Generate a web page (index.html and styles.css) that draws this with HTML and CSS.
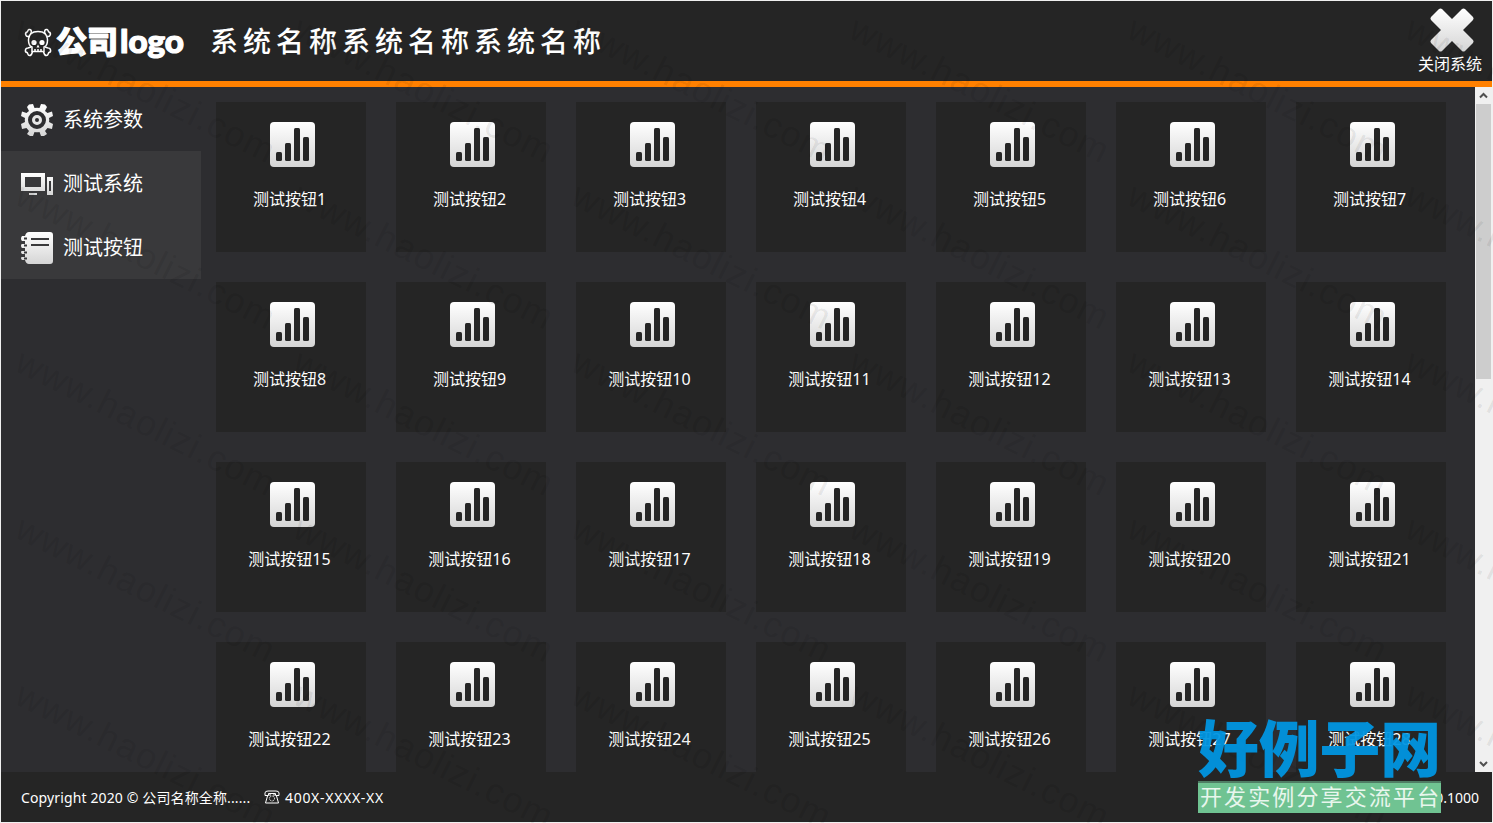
FILE: index.html
```html
<!DOCTYPE html>
<html lang="zh-CN">
<head>
<meta charset="utf-8">
<title>系统名称</title>
<link rel="stylesheet" href="styles.css">
</head>
<body>
<svg class="defs" width="0" height="0" aria-hidden="true">
  <defs>
    <linearGradient id="silver" x1="0" y1="0" x2="0" y2="1"><stop offset="0" stop-color="#fff"/><stop offset="1" stop-color="#d5d5d5"/></linearGradient>
    <symbol id="chart" viewBox="0 0 45 45">
      <rect width="45" height="45" rx="4" fill="url(#silver)"/>
      <g fill="#252525"><rect x="6" y="30" width="6" height="9" rx="1.5"/><rect x="15" y="21" width="6" height="18" rx="1.5"/><rect x="24" y="6" width="6" height="33" rx="1.5"/><rect x="33" y="15" width="6" height="24" rx="1.5"/></g>
    </symbol>
  </defs>
</svg>
<div class="window">
  <header class="header">
    <svg class="logo" width="164" height="44" viewBox="0 0 164 44">
      <g fill="none" stroke="#fff" stroke-width="1.5">
        <path d="M8 12C9 9 8 7 6 7.500C4.500 8 5 9.500 4 10C1.500 11 2.500 15 5.500 14.500L7 15M22 12C21 9 22 7 24 7.500C25.500 8 25 9.500 26 10C28.500 11 27.500 15 24.500 14.500L23 15M8 25L5 26C2 26 1.500 30 4 30.500C5 31 4.500 33.500 6.500 33.500C9 33.500 9 31 9.500 29.500M22 25L25 26C28 26 28.500 30 26 30.500C25 31 25.500 33.500 23.500 33.500C21 33.500 21 31 20.500 29.500"/>
        <path d="M5.500 18C5.500 12 9 9.500 15 9.500S24.500 12 24.500 18C24.500 22 24 24 21 25V29.500H9V25C6 24 5.500 22 5.500 18Z"/>
        <path d="M12 27v3M15 27v3M18 27v3"/>
      </g>
      <g fill="#fff"><circle cx="11" cy="20.500" r="2.600"/><circle cx="19" cy="20.500" r="2.600"/><path d="M15 22.500l-1.500 3h3z"/></g>
      <text class="logo-cn" x="33" y="31" textLength="62" lengthAdjust="spacingAndGlyphs">公司</text>
      <text class="logo-en" x="97" y="31" textLength="64" lengthAdjust="spacingAndGlyphs">logo</text>
    </svg>
    <h1 class="title">系统名称系统名称系统名称</h1>
    <button class="close">
      <svg width="46" height="46" viewBox="0 0 46 46"><path d="M10 2Q11.500 .8 13 2L23 12L33 2Q34.500 .8 36 2L44 10Q45.200 11.500 44 13L34 23L44 33Q45.200 34.500 44 36L36 44Q34.500 45.200 33 44L23 34L13 44Q11.500 45.200 10 44L2 36Q.8 34.500 2 33L12 23L2 13Q.8 11.500 2 10Z" fill="url(#silver)"/></svg>
      <span>关闭系统</span>
    </button>
  </header>
  <main class="main">
    <nav class="sidebar">
      <a class="item">
        <svg width="32" height="32" viewBox="0 0 32 32"><path fill="url(#silver)" fill-rule="evenodd" d="M8 0.500L12 0L13.500 4Q16 3.500 18.500 4L20 0L24 0.500L26 3L24 7L26.500 9L31 7.500L32 12L28 14Q28.500 16 28 18L32 20L31 25L26.500 24L24 27L26 30L23 32L20 32L18.500 28Q16 28.500 13.500 28L12 32L9 32L6 30L8 27L5.500 24L1 25L0 20L4 18Q3.500 16 4 14L0 12L1 7.500L5.500 9L8 7L6 3Z M16 7A9 9 0 1 0 16 25A9 9 0 1 0 16 7Z"/><circle cx="16" cy="16" r="3.500" fill="none" stroke="#e6e6e6" stroke-width="3"/></svg>
        <span>系统参数</span>
      </a>
      <div class="submenu">
        <a class="item">
          <svg width="32" height="32" viewBox="0 0 32 32"><path fill="url(#silver)" fill-rule="evenodd" d="M0 5H24V23H0ZM4 9V19H20V9ZM8 25H16V27H8ZM26 9H32V27H26ZM28 13V23H30V13Z"/></svg>
          <span>测试系统</span>
        </a>
        <a class="item">
          <svg width="32" height="32" viewBox="0 0 32 32"><path fill="url(#silver)" d="M8 0H29Q32 0 32 3V29Q32 32 29 32H8Q5 32 4 28H1Q0 27 0 26Q0 25 1 25H4V22H1Q0 21 0 20Q0 19 1 19H4V16H1Q0 15 0 13.500Q0 12 1 12H4V9H1Q0 8 0 6.500Q0 5 1 4H4Q5 0 8 0Z"/><path d="M10 7H28M10 13H28M3 6.500H6M3 13.500H6M3 20.500H6M3 26.500H6" stroke="#39393b" stroke-width="2"/></svg>
          <span>测试按钮</span>
        </a>
      </div>
    </nav>
    <section class="cards" id="cards"></section>
    <div class="scrollbar">
      <svg width="17" height="17" viewBox="0 0 17 17"><path d="M5 10.500L8.500 7L12 10.500" fill="none" stroke="#505050" stroke-width="2"/></svg>
      <div class="thumb"></div>
      <svg class="down" width="17" height="17" viewBox="0 0 17 17"><path d="M5 7L8.500 10.500L12 7" fill="none" stroke="#505050" stroke-width="2"/></svg>
    </div>
  </main>
  <footer class="footer">
    <span class="copyright">Copyright 2020 © 公司名称全称......</span>
    <svg class="phone" width="16" height="14" viewBox="0 0 16 14" fill="none" stroke="#fff"><path d="M1 5.500V3Q1 1 4 1H12Q15 1 15 3V5.500H11.500V3.500H4.500V5.500ZM3.500 6L1.500 13H14.500L12.500 6M6 4V6M10 4V6"/><circle cx="8" cy="8.500" r="2.500" stroke-dasharray="1 .6"/></svg>
    <span class="tel">400X-XXXX-XX</span>
    <span class="version">0.1000</span>
  </footer>
</div>
<svg class="watermark" width="1493" height="823" viewBox="0 0 1493 823" id="watermark"></svg>
<svg class="badge" width="246" height="98" viewBox="0 0 246 98">
  <text class="badge-name" x="1" y="56" textLength="243" lengthAdjust="spacingAndGlyphs">好例子网</text>
  <rect x="1" y="65" width="243" height="32" fill="#70c392"/>
  <rect x="1" y="65" width="243" height="2" fill="#4f7d64"/>
  <text class="badge-sub" x="3" y="89" textLength="239">开发实例分享交流平台</text>
</svg>
<script src="app.js"></script>
</body>
</html>
```
FILE: styles.css
```css
* { box-sizing: border-box; }
body {
  margin: 0;
  width: 1493px;
  height: 823px;
  overflow: hidden;
  position: relative;
  background: #f0f0f0;
  color: #fff;
  font-family: "Noto Sans", "Noto Sans CJK SC", sans-serif;
}
svg { display: block; flex: none; }
.defs { position: absolute; }
.window {
  width: 1493px;
  height: 823px;
  padding: 1px;
  display: flex;
  flex-direction: column;
}
.header {
  height: 86px;
  flex: none;
  display: flex;
  align-items: flex-start;
  background: #252525;
  border-bottom: 6px solid #ff8000;
  padding: 0 8px 0 22px;
}
.logo { margin-top: 21px; overflow: visible; }
.logo-cn {
  font: 900 31px "Noto Sans CJK SC", sans-serif;
  fill: #fff;
  stroke: #fff;
  stroke-width: 1.2px;
  stroke-linejoin: round;
}
.logo-en {
  font: 900 32px Lato, sans-serif;
  fill: #fff;
  stroke: #fff;
  stroke-width: 1.2px;
  stroke-linejoin: round;
}
.title {
  margin: 19px 0 0 23px;
  font: 500 28px/40px "Noto Sans CJK SC", sans-serif;
  letter-spacing: 5px;
  white-space: nowrap;
}
.close {
  margin-left: auto;
  padding: 6px 0 0;
  width: 68px;
  border: 0;
  background: none;
  color: #fff;
  font: 16px/20px "Noto Sans CJK SC", sans-serif;
}
.close svg { margin-left: 13px; }
.close span { display: block; }
.main {
  flex: 1;
  min-height: 0;
  display: flex;
  background: #2d2d30;
}
.sidebar { width: 200px; flex: none; }
.submenu { background: #39393b; }
.item {
  height: 64px;
  padding-left: 20px;
  display: flex;
  align-items: center;
  gap: 10px;
  font-size: 20px;
  line-height: 28px;
}
.item svg { margin-top: 2px; }
.item span { margin-top: 2px; }
.cards {
  flex: 1;
  overflow: hidden;
  padding: 15px;
  display: grid;
  grid-template-columns: repeat(7, 150px);
  grid-auto-rows: 150px;
  gap: 30px;
}
.card { background: #252525; padding-top: 20px; }
.card svg { margin-left: 54px; }
.card span {
  display: block;
  margin-top: 20px;
  padding-right: 3px;
  text-align: center;
  font-size: 16px;
  line-height: 24px;
}
.scrollbar {
  width: 17px;
  flex: none;
  background: #f0f0f0;
  display: flex;
  flex-direction: column;
}
.thumb { height: 275px; margin: 0 1px; background: #cdcdcd; }
.down { margin-top: auto; }
.footer {
  height: 50px;
  flex: none;
  display: flex;
  align-items: center;
  background: #252525;
  padding: 0 13px 0 20px;
  font-size: 14px;
  white-space: nowrap;
}
.copyright { width: 229px; letter-spacing: 0.13px; }
.phone { margin: 0 5px 0 14px; }
.tel { letter-spacing: 0.7px; }
.version { margin-left: auto; }
.watermark { position: absolute; left: 0; top: 0; pointer-events: none; }
.watermark text {
  font: 36px "Liberation Sans", sans-serif;
  fill: #000;
  fill-opacity: .08;
}
.badge { position: absolute; left: 1197px; top: 716px; }
.badge-name {
  font: 900 61px "Noto Sans CJK SC", sans-serif;
  fill: #0095e0;
  fill-opacity: .95;
}
.badge-sub { font: 22px "Noto Sans CJK SC", sans-serif; fill: #e8f6ed; }
```
FILE: app.js
```js
const cards = document.getElementById('cards');
for (let i = 1; i <= 28; i++) {
  const card = document.createElement('div');
  card.className = 'card';
  card.innerHTML = '<svg width="45" height="45"><use href="#chart"/></svg><span>测试按钮' + i + '</span>';
  cards.appendChild(card);
}

const mark = document.getElementById('watermark');
let texts = '';
for (let row = -1; row < 5; row++) {
  for (let col = -1; col < 6; col++) {
    const x = 13 + col * 278;
    const y = 37 + row * 166.5;
    texts += '<text textLength="284" transform="translate(' + x + ' ' + y + ') rotate(26.5)">www.haolizi.com</text>';
  }
}
mark.innerHTML = texts;
```
